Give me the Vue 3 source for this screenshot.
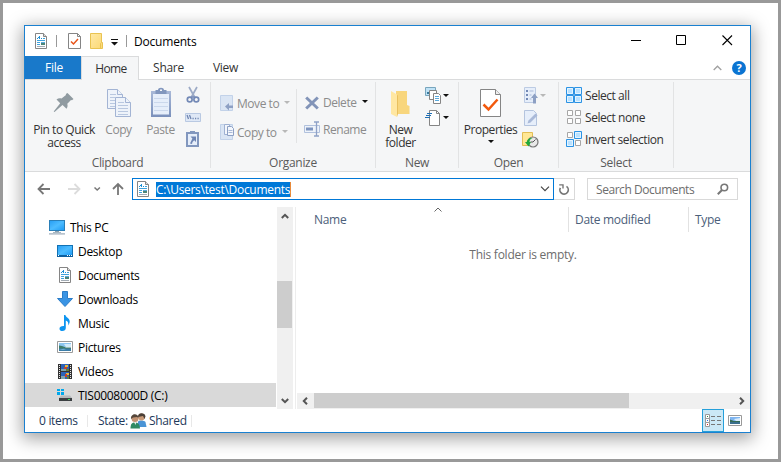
<script setup>
import { ref } from 'vue'

const tabs = ['Home', 'Share', 'View']
const activeTab = ref('Home')
const path = ref('C:\\Users\\test\\Documents')

const places = [
  { name: 'Desktop', icon: 'desktop' },
  { name: 'Documents', icon: 'document' },
  { name: 'Downloads', icon: 'download' },
  { name: 'Music', icon: 'music' },
  { name: 'Pictures', icon: 'picture' },
  { name: 'Videos', icon: 'video' },
  { name: 'TIS0008000D (C:)', icon: 'drive' },
]
const selected = ref('TIS0008000D (C:)')
</script>

<template>
  <svg class="sprite" width="0" height="0">
    <linearGradient id="screen" x1="0" y1="0" x2="1" y2="1">
      <stop offset="0" stop-color="#29a0f5" />
      <stop offset=".5" stop-color="#4dbcff" />
      <stop offset="1" stop-color="#1f9cf5" />
    </linearGradient>
    <linearGradient id="folder" x1="0" y1="0" x2="1" y2="1">
      <stop offset="0" stop-color="#ffe9a6" />
      <stop offset="1" stop-color="#fbd874" />
    </linearGradient>
    <linearGradient id="clip" x1="0" y1="0" x2="0" y2="1">
      <stop offset="0" stop-color="#a9b9d8" />
      <stop offset="1" stop-color="#7a90bb" />
    </linearGradient>

    <symbol id="pc" viewBox="0 0 16 16">
      <path d="M0 1h16v11H0z" fill="#2a7fb8" />
      <path d="M1 2h14v9H1z" fill="url(#screen)" />
      <path d="M6 12h4v1H6zM4 13h8v.7H4z" fill="#8aa0b0" />
      <path d="M0 14.3h16v1.2H0z" fill="#9aa9b8" />
    </symbol>
    <symbol id="desktop" viewBox="0 0 16 16">
      <path d="M0 2h16v12H0z" fill="#1272b4" />
      <path d="M1 3h14v9H1z" fill="url(#screen)" />
      <path d="M0 12h16v2H0z" fill="#0d5f9e" />
      <path d="M1 12h1v1H1zM10 12h1v1h-1zM12 12h1v1h-1zM14 12h1v1h-1z" fill="#fff" />
    </symbol>
    <symbol id="document" viewBox="0 0 16 16">
      <path d="M2.500.5h8l3 3v12h-11z" fill="#fff" stroke="#858585" />
      <path d="M10.500.5v3h3" fill="#ddd" stroke="#858585" />
      <path d="M6 3h1v3H6zM5 4h1v1H5zM4 5h1v1H4zM8 5h1v1H8z" fill="#1b8fd6" />
      <path d="M10 5h2v1h-2zM4 7h8v1H4zM4 9h3v1H4zM4 11h3v1H4z" fill="#3fa3dd" />
      <path d="M8 9h4v1H8z" fill="#5aa9dc" />
      <path d="M8 10h4v2H8z" fill="#4d8577" />
      <path d="M4 13h8v1H4z" fill="#a3acb5" />
    </symbol>
    <symbol id="download" viewBox="0 0 16 16">
      <path d="M5.500.5h5v7h5L8 15.500.5 7.500h5z" fill="#3a94e4" stroke="#2b7dc8" />
    </symbol>
    <symbol id="music" viewBox="0 0 16 16">
      <path d="M7 0h1.400c.2 2.500 4.300 3 4.300 6.300 0 1.700-.7 3-1.500 4.200.4-2.600-.2-4.100-2.400-4.900V13c0 1.700-1.500 3-3.400 3C3.700 16 2.500 15.100 2.500 13.700c0-1.600 1.700-2.800 4.500-2.600z" fill="#0e95f0" />
    </symbol>
    <symbol id="picture" viewBox="0 0 16 16">
      <path d="M.5 2.500h15v11H.5z" fill="#fff" stroke="#9a9a9a" />
      <path d="M2 4h12v4H2z" fill="#8cc5ef" />
      <path d="M7 5h7v3H9z" fill="#d3ebfa" />
      <path d="M2 6.500l3 .5 4 1.500h5V10H2z" fill="#3e7d68" />
      <path d="M2 9.500h12V12H2z" fill="#3b7da8" />
      <path d="M2 10.500l5-.8 2 .5-3 .8z" fill="#6fb1d3" />
    </symbol>
    <symbol id="video" viewBox="0 0 16 16">
      <path d="M1 1h14v15H1z" fill="#333" />
      <path d="M4 1h8v7H4z" fill="#2b63b8" />
      <path d="M4 9h8v7H4z" fill="#2b63b8" />
      <path d="M8 2h3v2H8zM9 10h3v2H9z" fill="#e9b93c" />
      <path d="M7 4h3v2H7zM8 11h2v3H8z" fill="#c4412c" />
      <path d="M4 6h5v2H4zM4 13h4v3H4z" fill="#7fa3ac" />
      <path d="M9 6h3v2H9zM10 13h2v3h-2z" fill="#5e7c39" />
      <path d="M2 2h1v1H2zM2 4h1v1H2zM2 6h1v1H2zM2 8h1v1H2zM2 10h1v1H2zM2 12h1v1H2zM2 14h1v1H2zM13 2h1v1h-1zM13 4h1v1h-1zM13 6h1v1h-1zM13 8h1v1h-1zM13 10h1v1h-1zM13 12h1v1h-1zM13 14h1v1h-1z" fill="#e8e8e8" />
    </symbol>
    <symbol id="drive" viewBox="0 0 16 16">
      <path d="M0 2h3v2H0zM4 2h3v2H4zM0 5h3v3H0zM4 5h3v3H4z" fill="#00a8ec" />
      <path d="M4 8.500h9l2 2.500H2z" fill="#b4b8bb" />
      <path d="M2 11h13v3H2z" fill="#3b3f42" />
      <path d="M11 12h2v1h-2z" fill="#3bd45b" />
    </symbol>
  </svg>

  <div class="backdrop">
    <div class="window">
      <header class="titlebar">
        <svg width="16" height="16"><use href="#document" /></svg>
        <i class="tb-sep"></i>
        <svg class="tb-check" width="13" height="16" viewBox="0 0 13 16">
          <path d="M.5.5h9l3 3v12H.5z" fill="#fff" stroke="#858585" />
          <path d="M9.500.5v3h3" fill="none" stroke="#858585" />
          <path d="M3 8.500l2.500 2.500 4.500-5" fill="none" stroke="#e8541a" stroke-width="1.500" />
        </svg>
        <svg class="tb-folder" width="13" height="16" viewBox="0 0 13 16">
          <path d="M.5.5h11v9h1v6H.5z" fill="url(#folder)" stroke="#e9c351" />
          <path d="M10.500 15.500v-5l1-1" fill="none" stroke="#e9c351" />
        </svg>
        <svg class="tb-more" width="7" height="7" viewBox="0 0 7 7">
          <path d="M0 0h7v1H0zM0 3h7L3.500 6.500z" fill="#111" />
        </svg>
        <i class="tb-sep second"></i>
        <span class="title">Documents</span>
        <div class="controls">
          <svg width="46" height="30" viewBox="0 0 46 30"><path d="M18 14.500h10" stroke="#000" /></svg>
          <svg width="45" height="30" viewBox="0 0 45 30"><path d="M17.500 9.500h9v9h-9z" fill="none" stroke="#000" /></svg>
          <svg width="46" height="30" viewBox="0 0 46 30"><path d="M18.500 9.500l9.500 9.500m0-9.500L18.500 19" stroke="#000" stroke-width="1.100" /></svg>
        </div>
      </header>

      <nav class="tabs">
        <button class="tab file">File</button>
        <button
          v-for="tab in tabs"
          :key="tab"
          class="tab"
          :class="{ active: tab === activeTab }"
          @click="activeTab = tab"
        >
          {{ tab }}
        </button>
        <span class="tabs-end">
          <svg width="9" height="6" viewBox="0 0 9 6"><path d="M.7 5L4.500 1.200 8.300 5" fill="none" stroke="#a0a0a0" stroke-width="1.300" /></svg>
          <span class="help">?</span>
        </span>
      </nav>

      <section class="ribbon">
        <div class="group clipboard">
          <div class="group-body">
            <div class="big pin">
              <svg width="22" height="32" viewBox="0 0 22 32">
                <path d="M14.500 7l6 6-1.500 1.300-1-.3-3.700 3.800c.6 2 .2 3.600-.8 5l-4-3.900-8 7.100-.8-.6 6.500-8.200-3.700-3.700c1.400-1.200 3.200-1.600 5-1L13 9l-.2-1z" fill="#909ba1" />
              </svg>
              <span>Pin to Quick<br />access</span>
            </div>
            <div class="big copy dim">
              <svg width="24" height="32" viewBox="0 0 24 32">
                <g fill="#eef3fa" stroke="#a3b4d4">
                  <path d="M.5 3.500h10l5 5v14H.5z" />
                  <path d="M10.500 3.500v5h5" />
                  <path d="M8.500 11.500h10l5 5v14h-15z" />
                  <path d="M18.500 11.500v5h5" />
                </g>
                <path d="M3 8.500h6M3 11.500h5M3 14.500h5M3 17.500h5M3 20.500h5M11 16.500h6M11 19.500h10M11 22.500h10M11 25.500h10M11 28.500h10" stroke="#b9c8e0" />
              </svg>
              <span>Copy</span>
            </div>
            <div class="big paste dim">
              <svg width="20" height="32" viewBox="0 0 20 32">
                <path d="M0 5h20v26H0z" fill="url(#clip)" />
                <path d="M2 8h16v20.500H2z" fill="#e6eefa" />
                <path d="M7 4c0-3 6-3 6 0h2.500v4h-11V4z" fill="#8297be" />
                <path d="M9 3.500h2v1.500H9z" fill="#f5f6f7" />
                <path d="M3 12.500h14M3 16.500h14M3 20.500h14M3 24.500h14" stroke="#cbd8ec" />
              </svg>
              <span>Paste</span>
            </div>
            <div class="stack">
              <svg width="16" height="22" viewBox="0 0 16 22">
                <path d="M4 3l5.300 9.500M12 3L6.700 12.500" stroke="#9caac6" stroke-width="1.700" />
                <circle cx="4.700" cy="15.500" r="2.400" fill="none" stroke="#7389b6" stroke-width="1.700" />
                <circle cx="11.300" cy="15.500" r="2.400" fill="none" stroke="#7389b6" stroke-width="1.700" />
                <path d="M5.500 13h5" stroke="#7389b6" stroke-width="1.500" />
              </svg>
              <svg width="16" height="22" viewBox="0 0 16 22">
                <path d="M.5 7.500h15v8H.5z" fill="#dfe8f6" stroke="#b9c9e2" />
                <path d="M2 9l1.500 4M4.500 9L6 13M7.500 12.500h1.200M10 12.500h1.200M12.500 12.500h1.200" stroke="#7086b2" stroke-width="1.300" />
              </svg>
              <svg width="16" height="22" viewBox="0 0 16 22">
                <path d="M1 4h13v15H1z" fill="#8297be" />
                <path d="M3 6h9v11H3z" fill="#e6eefa" />
                <path d="M5 3h5v3H5z" fill="#8297be" />
                <path d="M5.500 8.500H11V14L9.200 12.200 7.500 14l-.5 2-2-.5 2.400-5z" fill="#6f86b4" />
              </svg>
            </div>
          </div>
          <div class="group-label">Clipboard</div>
        </div>

        <div class="group organize">
          <div class="group-body">
            <div class="rows move">
              <div class="row dim">
                <svg width="16" height="16" viewBox="0 0 16 16">
                  <path d="M.5.5h12v15H.5z" fill="#dae5f4" stroke="#c2d2e9" />
                  <path d="M5 11.500L9 8v2.500h4v2.500H9v2.500z" fill="#8da0c4" />
                </svg>
                <span>Move to</span><b class="caret"></b>
              </div>
              <div class="row dim">
                <svg width="16" height="16" viewBox="0 0 16 16">
                  <path d="M.5.5h12v15H.5z" fill="#dae5f4" stroke="#c2d2e9" />
                  <path d="M4.500.5h5v10h-5z" fill="#f4f7fc" stroke="#9fb1d2" />
                  <path d="M7.500 2.500h4l2 2v7h-6z" fill="#f4f7fc" stroke="#8da0c4" />
                  <path d="M8.500 6.500h4M8.500 8.500h4" stroke="#a9b9d8" />
                </svg>
                <span>Copy to</span><b class="caret"></b>
              </div>
            </div>
            <div class="rows edit">
              <div class="row dim">
                <svg width="16" height="16" viewBox="0 0 16 16">
                  <path d="M2.200 3.500l11.600 11M13.800 3.500l-11.600 11" stroke="#8294b8" stroke-width="3" />
                </svg>
                <span>Delete</span><b class="caret dark"></b>
              </div>
              <div class="row dim">
                <svg width="16" height="16" viewBox="0 0 16 16">
                  <path d="M.5 4.500h15v7H.5z" fill="#eef3fa" stroke="#b1c1dd" />
                  <path d="M2 6.500h7v3H2z" fill="#7f95bf" />
                  <path d="M10 1h5M10 15h5M12.500 1v14" stroke="#8fa2c7" stroke-width="1.300" />
                </svg>
                <span>Rename</span>
              </div>
            </div>
          </div>
          <div class="group-label">Organize</div>
        </div>

        <div class="group new">
          <div class="group-body">
            <div class="big folder">
              <svg width="19" height="32" viewBox="0 0 19 32">
                <path d="M5 5h11v14l2.500 1v8H5z" fill="#f8d67d" />
                <path d="M0 5l6 3.500V31l-6-3z" fill="#ffe7a2" />
                <path d="M6 9.500V31l1-3V9z" fill="#e9c05f" />
              </svg>
              <span>New<br />folder</span>
            </div>
            <div class="stack">
              <div class="tool">
                <svg width="17" height="17" viewBox="0 0 17 17">
                  <path d="M.5.5h10v8H.5z" fill="#bfe2f6" stroke="#78a5bd" />
                  <path d="M2 5h7v2H2z" fill="#3a7a9c" />
                  <path d="M4.500 3.500h7v9h-7z" fill="#fff" stroke="#858585" />
                  <path d="M8.500 6.500h5l2 2v8h-7z" fill="#fff" stroke="#858585" />
                  <path d="M10 9.500h4M10 11.500h4M10 13.500h4" stroke="#5aa9dc" />
                </svg>
                <b class="caret dark"></b>
              </div>
              <div class="tool">
                <svg width="17" height="17" viewBox="0 0 17 17">
                  <path d="M4.500 1.500h7l3 3v12h-10z" fill="#fff" stroke="#858585" />
                  <path d="M11.500 1.500v3h3" fill="none" stroke="#858585" />
                  <path d="M2 4.500h5M1 6.500h5M0 8.500h5" stroke="#1e6fb5" />
                </svg>
                <b class="caret dark"></b>
              </div>
            </div>
          </div>
          <div class="group-label">New</div>
        </div>

        <div class="group open">
          <div class="group-body">
            <div class="big props">
              <svg width="22" height="32" viewBox="0 0 22 32">
                <path d="M.5 3.500h15l5 5v22H.5z" fill="#fff" stroke="#858585" />
                <path d="M15.500 3.500v5h5" fill="#eee" stroke="#858585" />
                <path d="M3.500 18.500l5 5 9-10" fill="none" stroke="#f2590d" stroke-width="2.500" />
              </svg>
              <span>Properties</span>
              <b class="caret dark"></b>
            </div>
            <div class="stack">
              <div class="tool">
                <svg width="17" height="17" viewBox="0 0 17 17">
                  <path d="M2.500.5h11v15h-11z" fill="#e6eefa" stroke="#bccbe3" />
                  <path d="M4 3h2v2H4zM4 7h2v2H4zM4 11h2v2H4z" fill="#7389b6" />
                  <path d="M7.500 4h4M7.500 8h2M7.500 12h2" stroke="#a9b9d8" />
                  <path d="M12.500 6.500L16 11h-2v5.500h-3V11H9z" fill="#8da0c4" />
                </svg>
                <b class="caret"></b>
              </div>
              <div class="tool">
                <svg width="17" height="17" viewBox="0 0 17 17">
                  <path d="M2.500 1.500h9l3 3v12h-12z" fill="#e6eefa" stroke="#b4c4de" />
                  <path d="M5.500 14.500l1-3 7-7 2 2-7 7z" fill="#a9b9d8" />
                </svg>
              </div>
              <div class="tool">
                <svg width="17" height="17" viewBox="0 0 17 17">
                  <path d="M.5 1.500h10v13H.5z" fill="#ffe794" stroke="#e2bd54" />
                  <circle cx="11" cy="11" r="5" fill="#e8e8e8" stroke="#777" stroke-width="1.200" />
                  <path d="M11 11l2.500-2.500M11 11H8.500" stroke="#555" />
                  <path d="M3 11l3.500 4.500L9 11H7.500c0-2 1-3.300 3-4-3.500-.3-5.500 1.500-5.800 4z" fill="#22a83a" />
                </svg>
              </div>
            </div>
          </div>
          <div class="group-label">Open</div>
        </div>

        <div class="group select">
          <div class="group-body">
            <div class="rows triple">
              <div class="row">
                <svg width="16" height="16" viewBox="0 0 16 16">
                  <g fill="#b9e1ff" stroke="#2c93e4"><path d="M.5.5h7v7h-7zM8.500.5h7v7h-7zM.5 8.500h7v7h-7zM8.500 8.500h7v7h-7z" /></g>
                  <g fill="none" stroke="#e4f4ff"><path d="M1.500 1.500h5v5h-5zM9.500 1.500h5v5h-5zM1.500 9.500h5v5h-5zM9.500 9.500h5v5h-5z" /></g>
                </svg>
                <span>Select all</span>
              </div>
              <div class="row">
                <svg width="16" height="16" viewBox="0 0 16 16">
                  <g fill="#fff" stroke="#a6a6a6"><path d="M1.500 1.500h5v5h-5zM9.500 1.500h5v5h-5zM1.500 9.500h5v5h-5zM9.500 9.500h5v5h-5z" /></g>
                </svg>
                <span>Select none</span>
              </div>
              <div class="row">
                <svg width="16" height="16" viewBox="0 0 16 16">
                  <g fill="#fff" stroke="#a6a6a6"><path d="M1.500 1.500h5v5h-5zM9.500 9.500h5v5h-5z" /></g>
                  <g fill="#b9e1ff" stroke="#2c93e4"><path d="M8.500.5h7v7h-7zM.5 8.500h7v7h-7z" /></g>
                  <g fill="none" stroke="#e4f4ff"><path d="M9.500 1.500h5v5h-5zM1.500 9.500h5v5h-5z" /></g>
                </svg>
                <span>Invert selection</span>
              </div>
            </div>
          </div>
          <div class="group-label">Select</div>
        </div>
      </section>

      <section class="addressbar">
        <svg width="107" height="22" viewBox="0 0 107 22">
          <g fill="none" stroke-width="1.800">
            <path d="M13.500 11h11.500M18.500 6l-5 5 5 5" stroke="#777" />
            <path d="M43 11h11.500M49.500 6l5 5-5 5" stroke="#dcdcdc" />
            <path d="M69.500 9.500l2.700 2.500 2.700-2.500" stroke="#777" stroke-width="1.500" />
            <path d="M93 17V6M88 11l5-5 5 5" stroke="#777" />
          </g>
        </svg>
        <div class="path">
          <svg width="16" height="16"><use href="#document" /></svg>
          <span class="path-text">{{ path }}</span>
          <svg class="drop" width="10" height="6" viewBox="0 0 10 6"><path d="M1 .7l4 4 4-4" fill="none" stroke="#444" stroke-width="1.200" /></svg>
        </div>
        <div class="refresh">
          <svg width="12" height="13" viewBox="0 0 12 13">
            <path d="M2.400 4.800A4.200 4.200 0 1 0 8.500 3.400" fill="none" stroke="#777" stroke-width="1.700" />
            <path d="M1.200 1.200h4.500v4.300H4.300V2.600H1.200z" fill="#777" />
          </svg>
        </div>
        <div class="search">
          <span>Search Documents</span>
          <svg width="12" height="12" viewBox="0 0 12 12">
            <circle cx="7.300" cy="4.500" r="3.300" fill="none" stroke="#777" stroke-width="1.600" />
            <path d="M5 7L.8 11.200" stroke="#777" stroke-width="2" />
          </svg>
        </div>
      </section>

      <main class="content">
        <aside class="tree">
          <div class="node root">
            <svg width="16" height="16"><use href="#pc" /></svg>
            <span>This PC</span>
          </div>
          <div
            v-for="place in places"
            :key="place.name"
            class="node"
            :class="{ selected: place.name === selected }"
            @click="selected = place.name"
          >
            <svg width="16" height="16"><use :href="'#' + place.icon" /></svg>
            <span>{{ place.name }}</span>
          </div>
        </aside>
        <div class="vscroll">
          <svg width="8" height="6" viewBox="0 0 8 6"><path d="M.8 5L4 1.800 7.200 5" fill="none" stroke="#555" stroke-width="2" /></svg>
          <i class="thumb"></i>
          <svg width="8" height="6" viewBox="0 0 8 6"><path d="M.8 1L4 4.200 7.200 1" fill="none" stroke="#555" stroke-width="2" /></svg>
        </div>
        <div class="list">
          <div class="columns">
            <span class="col name">
              Name
              <svg class="sort" width="8" height="5" viewBox="0 0 8 5"><path d="M.5 4.500L4 1l3.500 3.500" fill="none" stroke="#666" /></svg>
            </span>
            <span class="col date">Date modified</span>
            <span class="col">Type</span>
          </div>
          <p class="empty">This folder is empty.</p>
          <div class="hscroll">
            <svg width="6" height="8" viewBox="0 0 6 8"><path d="M5 .8L1.800 4 5 7.200" fill="none" stroke="#555" stroke-width="2" /></svg>
            <i class="thumb"></i>
            <svg width="6" height="8" viewBox="0 0 6 8"><path d="M1 .8L4.200 4 1 7.200" fill="none" stroke="#555" stroke-width="2" /></svg>
          </div>
        </div>
      </main>

      <footer class="status">
        <span class="items">0 items</span>
        <span class="state">
          State:
          <svg width="17" height="16" viewBox="0 0 17 16">
            <path d="M8 8.500c1-1.500 6-1.500 7.500.5L16.500 14H8z" fill="#4a94d6" />
            <circle cx="11.500" cy="4" r="3.400" fill="#c99a78" />
            <path d="M8 4c-.5-5 7-5 7.500-.5L14.500 6 13 3z" fill="#4b4038" />
            <path d="M.5 15.500c0-4.500 1.500-6 4.500-6s4.700 1.500 5 6z" fill="#2f8a64" />
            <path d="M4 9h2.500l-1 3z" fill="#e8eee8" />
            <circle cx="5" cy="5.500" r="3.500" fill="#c29373" />
            <path d="M1 6C.5 0 8.500 0 8.500 5L7 4 3 4.500z" fill="#54463a" />
          </svg>
          Shared
        </span>
        <div class="views">
          <span class="view active">
            <svg width="16" height="13" viewBox="0 0 16 13">
              <path d="M.5.5h4v4h-4zM.5 4.500h4v4h-4zM.5 8.500h4v4h-4z" fill="#fff" stroke="#9a9a9a" />
              <path d="M2 2h1v1H2z" fill="#2d8a4a" />
              <path d="M2 6h1v1H2z" fill="#2c6fe4" />
              <path d="M2 10h1v1H2z" fill="#e02020" />
              <path d="M6 2.500h4M12 2.500h4M6 6.500h4M12 6.500h4M6 10.500h4M12 10.500h4" stroke="#777" />
            </svg>
          </span>
          <span class="view">
            <svg width="14" height="11" viewBox="0 0 14 11">
              <path d="M.5.5h13v10H.5z" fill="#fff" stroke="#9a9a9a" />
              <path d="M2 2h10v4H2z" fill="#7fb5f0" />
              <path d="M6 4l6-1v3H8z" fill="#d9ecfb" />
              <path d="M2 4.500l4 1.500h6v1.500H2z" fill="#356b55" />
              <path d="M2 7h10v2H2z" fill="#3b6f8e" />
            </svg>
          </span>
        </div>
      </footer>
    </div>
  </div>
</template>

<style>
body {
  overflow: hidden;
  background: #fff;
}
</style>

<style scoped>
.sprite {
  position: absolute;
}

.backdrop {
  box-sizing: border-box;
  width: 781px;
  height: 462px;
  padding: 22px 21px;
  border: 3px solid #999;
  background: #fff;
  font: 12px/16px 'Open Sans', 'Noto Sans', sans-serif;
  letter-spacing: -0.3px;
  color: #000;
}

.window {
  display: flex;
  flex-direction: column;
  box-sizing: border-box;
  width: 727px;
  height: 408px;
  border: 1px solid #1a80d0;
  background: #fff;
  box-shadow: 0 4px 16px 2px rgba(0, 0, 0, 0.36);
}

svg {
  display: block;
  flex: none;
}

/* title bar */
.titlebar {
  display: flex;
  align-items: center;
  height: 30px;
  padding-left: 8px;
}

.tb-sep {
  width: 1px;
  height: 12px;
  margin-left: 7px;
  background: #999;
}

.tb-check {
  margin-left: 11px;
}

.tb-folder {
  margin-left: 9px;
}

.tb-more {
  margin: 3px 0 0 8px;
}

.tb-sep.second {
  margin-left: 8px;
}

.title {
  margin-left: 7px;
  padding-top: 2px;
  letter-spacing: -0.2px;
}

.controls {
  display: flex;
  margin-left: auto;
}

/* tabs */
.tabs {
  display: flex;
  height: 23px;
}

.tab {
  box-sizing: border-box;
  width: 57px;
  height: 23px;
  padding: 1px 0 0 2px;
  border: 0;
  background: none;
  font: inherit;
  letter-spacing: inherit;
  color: #333;
}

.tab.file {
  width: 56px;
  background: #1979ca;
  color: #fff;
}

.tab.active {
  width: 58px;
  height: 24px;
  padding-top: 0;
  border: 1px solid #dadbdc;
  border-bottom: 0;
  background: #f5f6f7;
  letter-spacing: -0.6px;
  z-index: 1;
}

.tabs-end {
  display: flex;
  align-items: center;
  gap: 10px;
  margin-left: auto;
  padding-right: 4px;
}

.help {
  width: 14px;
  height: 14px;
  border-radius: 50%;
  background: #0a74d2;
  color: #fff;
  font-weight: 700;
  font-size: 11px;
  line-height: 14px;
  text-align: center;
}

/* ribbon */
.ribbon {
  display: flex;
  box-sizing: border-box;
  height: 93px;
  padding-top: 2px;
  border-top: 1px solid #dadbdc;
  border-bottom: 1px solid #dadbdc;
  background: #f5f6f7;
  color: #333;
  letter-spacing: -0.45px;
}

.group {
  box-sizing: border-box;
  height: 86px;
  border-right: 1px solid #e2e3e4;
}

.group.clipboard {
  width: 186px;
}

.group.organize {
  width: 165px;
}

.group.new {
  width: 83px;
}

.group.open {
  width: 100px;
}

.group.select {
  width: 115px;
}

.group-body {
  display: flex;
  height: 73px;
}

.group-label {
  height: 13px;
  line-height: 15px;
  text-align: center;
  letter-spacing: -0.3px;
  color: #5a5a5a;
}

.big {
  display: flex;
  flex-direction: column;
  align-items: center;
  gap: 5px;
  padding-top: 4px;
  line-height: 13px;
  text-align: center;
  white-space: nowrap;
}

.big.pin {
  width: 78px;
}

.big.copy {
  width: 31px;
}

.big.paste {
  width: 53px;
}

.big.folder {
  width: 49px;
}

.big.props {
  width: 63px;
}

.big.props .caret {
  margin: -1px 0 0;
}

.dim {
  color: #8b8b8b;
}

.stack {
  display: flex;
  flex-direction: column;
  padding-top: 2px;
}

.clipboard .stack {
  margin-left: -2px;
}

.tool {
  display: flex;
  align-items: center;
  height: 22px;
}

.caret {
  width: 0;
  height: 0;
  margin-left: 5px;
  border: 3px solid transparent;
  border-top-color: #b8b8b8;
  border-bottom: 0;
}

.caret.dark {
  border-top-color: #111;
}

.tool .caret {
  margin-left: 1px;
}

.rows {
  display: flex;
  flex-direction: column;
  padding-top: 6px;
}

.row {
  display: flex;
  align-items: center;
  height: 29px;
  white-space: nowrap;
}

.row span {
  margin-left: 3px;
  padding-top: 2px;
}

.rows.move {
  box-sizing: border-box;
  width: 85px;
  padding-left: 9px;
}

.rows.move span {
  margin-left: 1px;
}

.rows.edit {
  height: 54px;
  margin-top: 7px;
  padding: 0 0 0 7px;
  border-left: 1px solid #e2e3e4;
}

.rows.edit .row {
  margin-top: -1px;
  margin-bottom: 1px;
}

.rows.triple {
  padding: 2px 0 0 7px;
}

.rows.triple .row {
  height: 22px;
}

/* address bar */
.addressbar {
  display: flex;
  height: 22px;
  padding: 6px 12px 7px 0;
}

.path,
.refresh,
.search {
  display: flex;
  align-items: center;
  box-sizing: border-box;
  height: 22px;
  border: 1px solid #d9d9d9;
}

.path {
  width: 422px;
  padding: 0 3px 0 2px;
  border-color: #0078d7;
}

.path-text {
  height: 15px;
  margin-left: 5px;
  border-right: 1px solid #e8893a;
  background: #0078d7;
  color: #fff;
  line-height: 15px;
}

.drop {
  margin-left: auto;
}

.refresh {
  justify-content: center;
  width: 21px;
  border-left: 0;
}

.search {
  justify-content: space-between;
  width: 151px;
  margin-left: 12px;
  padding: 0 8px;
  color: #6d6d6d;
  letter-spacing: -0.45px;
}

.search span {
  padding-top: 1px;
}

/* folder tree and file list */
.content {
  display: flex;
  height: 202px;
}

.tree {
  width: 252px;
  padding-top: 8px;
}

.node {
  display: flex;
  align-items: center;
  gap: 5px;
  width: 219px;
  height: 24px;
  padding-left: 32px;
}

.node span {
  padding-top: 1px;
}

.node.root {
  padding-left: 24px;
}

.node.selected {
  background: #d9d9d9;
}

.vscroll {
  display: flex;
  flex-direction: column;
  align-items: center;
  justify-content: space-between;
  box-sizing: border-box;
  width: 16px;
  padding: 6px 0 5px;
  background: #f0f0f0;
}

.vscroll .thumb {
  width: 15px;
  height: 47px;
  margin: 61px 1px 0 0;
  background: #cdcdcd;
}

.vscroll svg:last-child {
  margin-top: 70px;
}

.list {
  flex: 1;
  display: flex;
  flex-direction: column;
  margin-left: 2px;
  border-left: 1px solid #ededed;
}

.columns {
  display: flex;
  height: 25px;
  color: #4c607a;
  line-height: 26px;
}

.col {
  box-sizing: border-box;
  height: 25px;
  padding-left: 6px;
  border-left: 1px solid #e2e2e2;
}

.col.name {
  position: relative;
  width: 272px;
  padding-left: 18px;
  border-left: 0;
}

.sort {
  position: absolute;
  top: 0;
  left: 138px;
}

.col.date {
  width: 120px;
}

.empty {
  margin: 15px 0 0;
  text-align: center;
  color: #6d6d6d;
  letter-spacing: -0.25px;
}

.hscroll {
  display: flex;
  align-items: center;
  justify-content: space-between;
  box-sizing: border-box;
  height: 16px;
  margin: auto 0 0 1px;
  padding: 0 5px;
  background: #f0f0f0;
}

.hscroll .thumb {
  width: 315px;
  height: 15px;
  margin: 0 auto 1px 6px;
  background: #cdcdcd;
}

/* status bar */
.status {
  display: flex;
  align-items: center;
  height: 23px;
  color: #1e395b;
}

.items,
.state {
  display: flex;
  align-items: center;
  box-sizing: border-box;
  height: 12px;
  border-right: 1px solid #e8e8e8;
}

.items {
  width: 63px;
  padding-left: 14px;
}

.state {
  gap: 2px;
  width: 104px;
  padding-left: 10px;
}

.views {
  display: flex;
  margin-left: auto;
  padding-right: 4px;
}

.view {
  display: flex;
  align-items: center;
  justify-content: center;
  box-sizing: border-box;
  width: 22px;
  height: 23px;
}

.view.active {
  border: 1px solid #26a0da;
  background: #cbe8f6;
}
</style>
